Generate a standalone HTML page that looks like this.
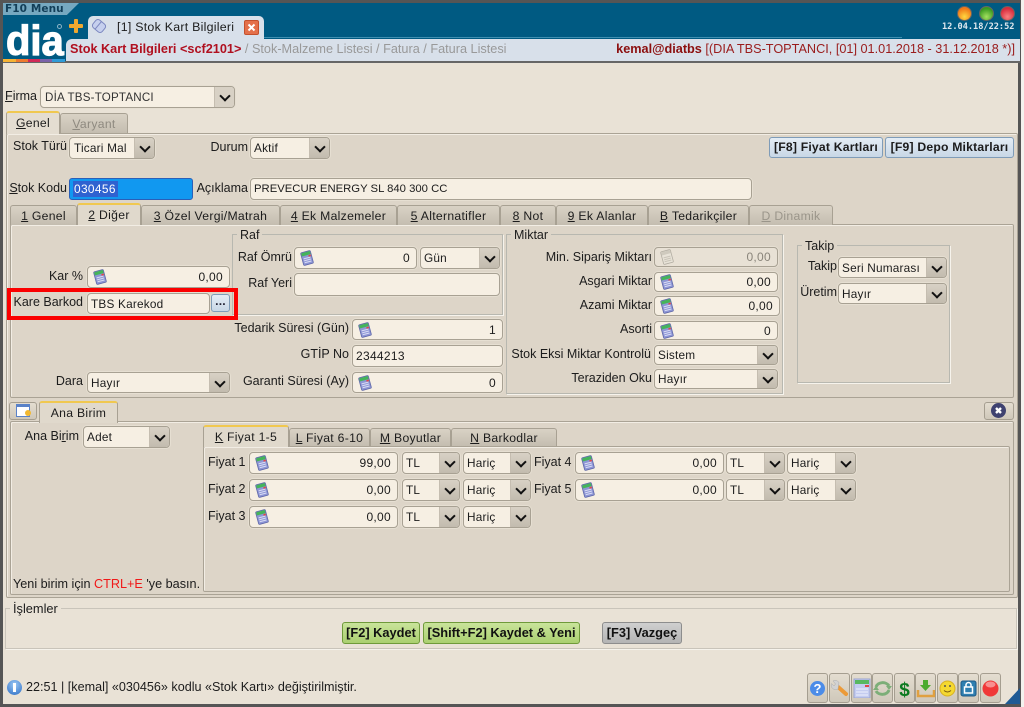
<!DOCTYPE html>
<html><head><meta charset="utf-8"><style>
html,body{margin:0;padding:0;width:1024px;height:707px;overflow:hidden;background:#f4f2ee}
body{position:relative;font-family:"Liberation Sans",sans-serif;font-size:12.5px;color:#1c1c1c}
div,span.a{position:absolute;box-sizing:border-box}
.l{line-height:16px;height:16px;text-align:right;white-space:nowrap;left:0}
.t{line-height:16px;height:16px;white-space:nowrap}
.f{background:#f6efe3;border:1px solid #a8a193;border-radius:4px;box-shadow:0 0 0 1px #e6dfd2;font-size:11.8px;letter-spacing:.2px;white-space:nowrap;overflow:hidden;padding-left:3px;display:flex;align-items:center}
.f.r{justify-content:flex-end;padding-right:6px;font-size:12px;letter-spacing:.3px}
.f svg{position:absolute;left:4px;top:50%;margin-top:-8px}
.s .b{right:0;top:0;bottom:0;width:20px;background:linear-gradient(#d8d1c5,#c2bbae);border-left:1px solid #c5bdb0}
.s .b:after{content:"";position:absolute;left:6px;top:50%;margin-top:-5px;width:6px;height:6px;border:solid #111;border-width:0 2px 2px 0;transform:rotate(45deg)}
.tab{background:linear-gradient(#d9d2c5,#c4bdb0);border:1px solid #a8a193;border-bottom:0;border-radius:3px 3px 0 0;text-align:center;white-space:nowrap;letter-spacing:.3px;font-size:12.2px}
.tab.on{background:#e0d9cc;border-top:2px solid #f0c850;z-index:3}
.p{background:#ddd5c8;border:1px solid #aaa395;border-radius:2px;box-shadow:inset 1px 1px 0 #f2ede4}
.fs{border:1px solid #b8b8b0;box-shadow:1px 1px 0 #f6f3ec}
.lg{background:#ddd5c8;padding:0 3px;line-height:14px;height:14px}
.bt{background:linear-gradient(#e4edf5,#c8d7e6);border:1px solid #7f9cb8;border-radius:3px;font-weight:bold;text-align:center;white-space:nowrap;font-size:12.2px;letter-spacing:.2px}
.g{background:linear-gradient(#c9e49a,#aad070);border:1px solid #6f9a3a;border-radius:3px;font-weight:bold;text-align:center;white-space:nowrap;font-size:12.8px;line-height:20px;color:#111}
.tb{top:673px;width:21px;height:30px;background:linear-gradient(#e4ddd0,#cfc8ba);border:1px solid #a59e90;border-radius:3px}
.tb svg{position:absolute;left:0;top:4px}
u{text-underline-offset:1px}
</style></head><body>
<svg width="0" height="0" style="position:absolute"><defs>
<symbol id="c" viewBox="0 0 16 16"><g transform="rotate(-15 8 8)"><rect x="3" y="1.5" width="10" height="13" rx="1" fill="#8e96d6" stroke="#5f68a8" stroke-width=".8"/><rect x="3.5" y="2" width="9" height="3.2" fill="#45b45a"/><rect x="10" y="5.6" width="2.4" height="1.6" fill="#e04848"/><path d="M4.5 8h7M4.5 10h7M4.5 12h7" stroke="#d9dcf4" stroke-width="1"/></g></symbol>
<symbol id="d" viewBox="0 0 16 16"><g transform="rotate(-15 8 8)"><rect x="3" y="1.5" width="10" height="13" rx="1" fill="#e8e3d8" stroke="#b2ada2" stroke-width=".8"/><rect x="3.5" y="2" width="9" height="3.2" fill="#cfcabe"/><path d="M4.5 8h7M4.5 10h7M4.5 12h7" stroke="#c9c4b8" stroke-width="1"/></g></symbol>
</defs></svg>

<!-- window -->
<div style="left:0;top:0;width:1021px;height:707px;background:#e9e2d6;border:3px solid #555;border-bottom-width:3px"></div>
<div style="left:3px;top:3px;width:1017px;height:59px;background:#005a82"></div>
<div style="left:3px;top:3px;width:76px;height:12px;background:#76a8c0;clip-path:polygon(0 0,100% 0,84% 100%,0 100%)"></div>
<div class="t" style="left:5px;top:2px;font-family:'DejaVu Sans',sans-serif;font-weight:bold;font-size:10.5px;line-height:14px;height:14px;color:#123e58;letter-spacing:.1px">F10 Menu</div>
<div style="left:6px;top:20px;font-weight:bold;font-size:42px;line-height:42px;height:42px;color:#fff;transform:scaleX(.95);transform-origin:0 0;-webkit-text-stroke:1.2px #fff;z-index:1">dia</div>
<div style="left:57px;top:24px;width:5px;height:5px;border:1px solid #8db5c8;border-radius:50%"></div>
<div style="left:3px;top:59px;width:13px;height:3px;background:#f5b335;z-index:2"></div>
<div style="left:16px;top:59px;width:12px;height:3px;background:#ee7a30;z-index:2"></div>
<div style="left:28px;top:59px;width:12px;height:3px;background:#d02a58;z-index:2"></div>
<div style="left:40px;top:59px;width:12px;height:3px;background:#7a62a8;z-index:2"></div>
<div style="left:52px;top:59px;width:13px;height:3px;background:#2f9ad6;z-index:2"></div>
<div style="left:74px;top:19px;width:4px;height:14px;background:#f0a830;border-radius:1px"></div>
<div style="left:69px;top:24px;width:14px;height:4px;background:#f0a830;border-radius:1px"></div>

<div style="left:88px;top:16px;width:176px;height:24px;background:#d8e0ea;border-radius:5px 5px 0 0"></div>
<svg style="position:absolute;left:90px;top:17px" width="18" height="18" viewBox="0 0 18 18"><g transform="rotate(40 9 9)"><rect x="3" y="4" width="12" height="10" rx="3" fill="#c6d0ee" stroke="#7c88c0"/><path d="M8 4v10" stroke="#7c88c0"/></g></svg>
<div class="t" style="left:117px;top:19px;letter-spacing:.25px;font-size:12.4px">[1] Stok Kart Bilgileri</div>
<div style="left:244px;top:20px;width:15px;height:15px;background:#e4704a;border:1px solid #c4502c;border-radius:2px"></div>
<svg style="position:absolute;left:244px;top:20px" width="15" height="15"><path d="M4.5 4.5l6 6M10.500 4.500l-6 6" stroke="#fff" stroke-width="2"/></svg>
<div style="left:264px;top:37px;width:638px;height:1px;background:#3f8fb0"></div>
<div style="left:66px;top:39px;width:954px;height:22px;background:#d8e0ea;border-radius:6px 0 0 0"></div>
<div style="left:3px;top:61px;width:1017px;height:2px;background:#666"></div>
<div class="t" style="left:70px;top:41px;white-space:nowrap;font-size:12.7px;color:#999"><b style="color:#b01020">Stok Kart Bilgileri &lt;scf2101&gt;</b> / Stok-Malzeme Listesi / Fatura / Fatura Listesi</div>
<div class="t" style="left:0;width:1015px;text-align:right;top:41px;font-size:12.7px;color:#9a1c1c"><b style="color:#8c0f0f">kemal@diatbs</b> [(DIA TBS-TOPTANCI, [01] 01.01.2018 - 31.12.2018 *)]</div>
<div style="left:957px;top:6px;width:15px;height:15px;border-radius:50%;background:radial-gradient(circle at 50% 75%,#ffd840,#f07818 70%);border:1px solid #666"></div>
<div style="left:979px;top:6px;width:15px;height:15px;border-radius:50%;background:radial-gradient(circle at 50% 75%,#a4e060,#3a9a20 70%);border:1px solid #666"></div>
<div style="left:1000px;top:6px;width:15px;height:15px;border-radius:50%;background:radial-gradient(circle at 50% 75%,#f88080,#d82c3c 70%);border:1px solid #666"></div>
<div class="t" style="left:942px;top:20px;font-family:'DejaVu Sans Mono','Liberation Mono',monospace;font-weight:bold;font-size:8.6px;color:#dfe8ee;line-height:14px;height:14px">12.04.18/22:52</div>

<!-- firma -->
<div class="l" style="width:37px;top:88px"><u>F</u>irma</div>
<div class="f s" style="left:40px;top:86px;width:195px;height:22px;color:#333;font-size:11.6px;padding-left:4px">DİA TBS-TOPTANCI<div class="b" style="background:#d8d1c5"></div></div>

<!-- outer tabs -->
<div class="tab on" style="left:6px;top:111px;width:54px;height:23px;line-height:21px;background:#e4ddd1"><u>G</u>enel</div>
<div class="tab" style="left:60px;top:113px;width:68px;height:20px;line-height:20px;color:#8f8a80"><u>V</u>aryant</div>
<div class="p" style="left:6px;top:133px;width:1012px;height:465px"></div>

<div class="l" style="width:67px;top:138px">Stok Türü</div>
<div class="f s" style="left:69px;top:137px;width:86px;height:22px;padding-left:4px">Ticari Mal<div class="b"></div></div>
<div class="l" style="width:248px;top:139px">Durum</div>
<div class="f s" style="left:250px;top:137px;width:80px;height:22px">Aktif<div class="b"></div></div>
<div class="bt" style="left:769px;top:137px;width:114px;height:21px;line-height:19px">[F8] Fiyat Kartları</div>
<div class="bt" style="left:885px;top:137px;width:129px;height:21px;line-height:19px">[F9] Depo Miktarları</div>

<div class="l" style="width:67px;top:180px"><u>S</u>tok Kodu</div>
<div style="left:69px;top:178px;width:124px;height:22px;background:#1198f0;border:1px solid #2a5fb8;border-radius:3px"></div>
<div style="left:73px;top:181px;width:45px;height:16px;background:#2f62d0;color:#fff;font-size:11.9px;letter-spacing:.35px;line-height:16px;padding-left:1px">030456</div>
<div class="l" style="width:248px;top:180px">Açıklama</div>
<div class="f" style="left:250px;top:178px;width:502px;height:22px;font-size:11.3px;letter-spacing:0;padding-left:3px">PREVECUR ENERGY SL 840 300 CC</div>

<!-- inner tabs -->
<div class="p" style="left:10px;top:224px;width:1004px;height:174px"></div>
<div class="tab" style="left:10px;top:205px;width:67px;height:20px;line-height:20px"><u>1</u> Genel</div>
<div class="tab on" style="left:77px;top:203px;width:64px;height:22px;line-height:20px"><u>2</u> Diğer</div>
<div class="tab" style="left:141px;top:205px;width:139px;height:20px;line-height:20px"><u>3</u> Özel Vergi/Matrah</div>
<div class="tab" style="left:280px;top:205px;width:117px;height:20px;line-height:20px"><u>4</u> Ek Malzemeler</div>
<div class="tab" style="left:397px;top:205px;width:103px;height:20px;line-height:20px"><u>5</u> Alternatifler</div>
<div class="tab" style="left:500px;top:205px;width:56px;height:20px;line-height:20px"><u>8</u> Not</div>
<div class="tab" style="left:556px;top:205px;width:92px;height:20px;line-height:20px"><u>9</u> Ek Alanlar</div>
<div class="tab" style="left:648px;top:205px;width:101px;height:20px;line-height:20px"><u>B</u> Tedarikçiler</div>
<div class="tab" style="left:749px;top:205px;width:84px;height:20px;line-height:20px;color:#9a958a"><u>D</u> Dinamik</div>

<!-- fieldsets -->
<div class="fs" style="left:232px;top:234px;width:271px;height:81px"></div>
<div class="lg" style="left:237px;top:228px">Raf</div>
<div class="fs" style="left:506px;top:234px;width:277px;height:160px"></div>
<div class="lg" style="left:511px;top:228px">Miktar</div>
<div class="fs" style="left:797px;top:245px;width:153px;height:138px"></div>
<div class="lg" style="left:802px;top:239px">Takip</div>

<!-- left column -->
<div class="l" style="width:83px;top:268px">Kar %</div>
<div class="f r" style="left:87px;top:266px;width:143px;height:22px"><svg width="16" height="16"><use href="#c"/></svg>0,00</div>
<div class="l" style="width:83px;top:294px">Kare Barkod</div>
<div class="f" style="left:87px;top:293px;width:123px;height:21px">TBS Karekod</div>
<div class="bt" style="left:211px;top:294px;width:19px;height:18px;line-height:13px;color:#223">...</div>
<div style="left:7px;top:288px;width:231px;height:32px;border:4px solid #fb0000;z-index:5"></div>
<div class="l" style="width:83px;top:373px">Dara</div>
<div class="f s" style="left:87px;top:372px;width:143px;height:21px">Hayır<div class="b"></div></div>

<!-- raf -->
<div class="l" style="width:292px;top:249px">Raf Ömrü</div>
<div class="f r" style="left:294px;top:247px;width:123px;height:22px"><svg width="16" height="16"><use href="#c"/></svg>0</div>
<div class="f s" style="left:420px;top:247px;width:80px;height:22px">Gün<div class="b"></div></div>
<div class="l" style="width:292px;top:275px">Raf Yeri</div>
<div class="f" style="left:294px;top:273px;width:206px;height:23px"></div>
<div class="l" style="width:349px;top:320px">Tedarik Süresi (Gün)</div>
<div class="f r" style="left:352px;top:319px;width:151px;height:21px"><svg width="16" height="16"><use href="#c"/></svg>1</div>
<div class="l" style="width:349px;top:346px">GTİP No</div>
<div class="f" style="left:352px;top:345px;width:151px;height:22px;font-size:12px;letter-spacing:.3px">2344213</div>
<div class="l" style="width:349px;top:373px">Garanti Süresi (Ay)</div>
<div class="f r" style="left:352px;top:372px;width:151px;height:21px"><svg width="16" height="16"><use href="#c"/></svg>0</div>

<!-- miktar -->
<div class="l" style="width:652px;top:249px">Min. Sipariş Miktarı</div>
<div class="f r" style="left:654px;top:247px;width:124px;height:20px;background:#e8e1d5;color:#8a857b"><svg width="16" height="16"><use href="#d"/></svg>0,00</div>
<div class="l" style="width:652px;top:273px">Asgari Miktar</div>
<div class="f r" style="left:654px;top:272px;width:124px;height:20px"><svg width="16" height="16"><use href="#c"/></svg>0,00</div>
<div class="l" style="width:652px;top:297px">Azami Miktar</div>
<div class="f r" style="left:654px;top:296px;width:126px;height:20px"><svg width="16" height="16"><use href="#c"/></svg>0,00</div>
<div class="l" style="width:652px;top:321px">Asorti</div>
<div class="f r" style="left:654px;top:321px;width:124px;height:19px"><svg width="16" height="16"><use href="#c"/></svg>0</div>
<div class="l" style="width:651px;top:346px">Stok Eksi Miktar Kontrolü</div>
<div class="f s" style="left:654px;top:345px;width:124px;height:20px">Sistem<div class="b"></div></div>
<div class="l" style="width:652px;top:370px">Teraziden Oku</div>
<div class="f s" style="left:654px;top:369px;width:124px;height:20px">Hayır<div class="b"></div></div>

<!-- takip -->
<div class="l" style="width:837px;top:258px">Takip</div>
<div class="f s" style="left:838px;top:257px;width:109px;height:21px">Seri Numarası<div class="b"></div></div>
<div class="l" style="width:837px;top:284px">Üretim</div>
<div class="f s" style="left:838px;top:283px;width:109px;height:21px">Hayır<div class="b"></div></div>

<!-- lower -->
<div style="left:9px;top:402px;width:28px;height:18px;background:linear-gradient(#e4ddd0,#cfc8ba);border:1px solid #a59e90;border-radius:3px"></div>
<div style="left:16px;top:404px;width:14px;height:13px;background:#fff;border:1px solid #5a82c8;border-top-width:3px"></div>
<div style="left:25px;top:410px;width:6px;height:6px;background:#f2b830;border-radius:50%"></div>
<div class="p" style="left:10px;top:421px;width:1004px;height:174px"></div>
<div class="tab on" style="left:39px;top:401px;width:79px;height:22px;line-height:20px">Ana Birim</div>
<div style="left:984px;top:402px;width:30px;height:18px;background:linear-gradient(#e4ddd0,#cfc8ba);border:1px solid #a59e90;border-radius:3px"></div>
<div style="left:991px;top:403px;width:15px;height:15px;border-radius:50%;background:#3f4270"></div>
<svg style="position:absolute;left:991px;top:403px" width="15" height="15"><path d="M5 5l5 5M10 5l-5 5" stroke="#fff" stroke-width="2.400"/></svg>

<div class="l" style="width:79px;top:428px">Ana Bi<u>r</u>im</div>
<div class="f s" style="left:83px;top:426px;width:87px;height:22px">Adet<div class="b"></div></div>
<div class="t" style="left:13px;top:576px;font-size:12.65px">Yeni birim için <span style="color:#f01818">CTRL+E</span> 'ye basın.</div>

<div class="p" style="left:203px;top:446px;width:807px;height:146px"></div>
<div class="tab on" style="left:203px;top:425px;width:86px;height:22px;line-height:20px"><u>K</u> Fiyat 1-5</div>
<div class="tab" style="left:289px;top:428px;width:81px;height:18px;line-height:18px"><u>L</u> Fiyat 6-10</div>
<div class="tab" style="left:370px;top:428px;width:81px;height:18px;line-height:18px"><u>M</u> Boyutlar</div>
<div class="tab" style="left:451px;top:428px;width:106px;height:18px;line-height:18px"><u>N</u> Barkodlar</div>

<div class="t" style="left:208px;top:454px">Fiyat 1</div>
<div class="f r" style="left:249px;top:452px;width:149px;height:22px"><svg width="16" height="16"><use href="#c"/></svg>99,00</div>
<div class="f s" style="left:402px;top:452px;width:58px;height:22px">TL<div class="b"></div></div>
<div class="f s" style="left:463px;top:452px;width:68px;height:22px">Hariç<div class="b"></div></div>
<div class="t" style="left:208px;top:481px">Fiyat 2</div>
<div class="f r" style="left:249px;top:479px;width:149px;height:22px"><svg width="16" height="16"><use href="#c"/></svg>0,00</div>
<div class="f s" style="left:402px;top:479px;width:58px;height:22px">TL<div class="b"></div></div>
<div class="f s" style="left:463px;top:479px;width:68px;height:22px">Hariç<div class="b"></div></div>
<div class="t" style="left:208px;top:508px">Fiyat 3</div>
<div class="f r" style="left:249px;top:506px;width:149px;height:22px"><svg width="16" height="16"><use href="#c"/></svg>0,00</div>
<div class="f s" style="left:402px;top:506px;width:58px;height:22px">TL<div class="b"></div></div>
<div class="f s" style="left:463px;top:506px;width:68px;height:22px">Hariç<div class="b"></div></div>
<div class="t" style="left:534px;top:454px">Fiyat 4</div>
<div class="f r" style="left:575px;top:452px;width:149px;height:22px"><svg width="16" height="16"><use href="#c"/></svg>0,00</div>
<div class="f s" style="left:726px;top:452px;width:59px;height:22px">TL<div class="b"></div></div>
<div class="f s" style="left:787px;top:452px;width:69px;height:22px">Hariç<div class="b"></div></div>
<div class="t" style="left:534px;top:481px">Fiyat 5</div>
<div class="f r" style="left:575px;top:479px;width:149px;height:22px"><svg width="16" height="16"><use href="#c"/></svg>0,00</div>
<div class="f s" style="left:726px;top:479px;width:59px;height:22px">TL<div class="b"></div></div>
<div class="f s" style="left:787px;top:479px;width:69px;height:22px">Hariç<div class="b"></div></div>

<!-- islemler -->
<div class="fs" style="left:5px;top:608px;width:1012px;height:41px;border-color:#c9c4ba"></div>
<div class="lg" style="left:10px;top:602px;background:#e9e2d6;font-size:12.8px">İşlemler</div>
<div class="g" style="left:342px;top:622px;width:78px;height:22px">[F2] Kaydet</div>
<div class="g" style="left:423px;top:622px;width:157px;height:22px">[Shift+F2] Kaydet &amp; Yeni</div>
<div class="g" style="left:602px;top:622px;width:80px;height:22px;background:linear-gradient(#cfcfcf,#b4b4b4);border-color:#8d8d8d">[F3] Vazgeç</div>

<!-- status -->
<div style="left:7px;top:680px;width:15px;height:15px;border-radius:50%;background:radial-gradient(circle at 50% 30%,#9cc8f4,#2a6cc4)"></div>
<div style="left:13px;top:683px;width:3px;height:9px;background:#fff"></div>
<div class="t" style="left:26px;top:679px;font-size:12.6px">22:51 | [kemal] «030456» kodlu «Stok Kartı» değiştirilmiştir.</div>

<!-- toolbar -->
<div class="tb" style="left:807px"><svg width="19" height="20"><circle cx="9.500" cy="10.500" r="7.500" fill="#4c8ce8"/><text x="9.500" y="15" font-size="13" font-weight="bold" fill="#fff" text-anchor="middle" font-family="Liberation Sans">?</text></svg></div>
<div class="tb" style="left:829px"><svg width="19" height="20"><path d="M7 8l9 8" stroke="#ec9a38" stroke-width="4" stroke-linecap="round"/><path d="M9 4.500A4.500 4.500 0 0 0 3 3l2.500 3-1.500 2L1.500 5.500A4.500 4.500 0 0 0 8 11z" fill="#d2d2d2" stroke="#aaa" stroke-width=".5"/></svg></div>
<div class="tb" style="left:851px"><svg width="19" height="20"><rect x="2" y="1" width="16" height="19" fill="#c4ccf0" stroke="#9aa4d0"/><rect x="3" y="2" width="14" height="4" fill="#58b860"/><rect x="13" y="7" width="4" height="2" fill="#e04848"/><path d="M4 11h12M4 14h12M4 17h12" stroke="#eef0fb"/></svg></div>
<div class="tb" style="left:872px"><svg width="19" height="20"><path d="M3 9a7 6 0 0 1 13-1M16 12a7 6 0 0 1-13 1" fill="none" stroke="#7cae78" stroke-width="3"/><path d="M13 8h6l-3 4zM0 12h6l-3-4z" fill="#7cae78"/></svg></div>
<div class="tb" style="left:894px"><svg width="19" height="20"><text x="9.500" y="18" font-size="19" font-weight="bold" fill="#0c7a20" text-anchor="middle" font-family="Liberation Sans">$</text></svg></div>
<div class="tb" style="left:915px"><svg width="19" height="20"><path d="M7 2h5v5h3l-5.500 6L4 7h3z" fill="#4cab30"/><path d="M2 12v6h16v-6" fill="none" stroke="#e0a040" stroke-width="2.500"/></svg></div>
<div class="tb" style="left:937px"><svg width="19" height="20"><circle cx="9.500" cy="10.500" r="7.500" fill="#f4d830" stroke="#d8b020"/><path d="M6 12.500q3.500 3 7 0" fill="none" stroke="#806010"/><circle cx="7" cy="8" r="1" fill="#555"/><circle cx="12" cy="8" r="1" fill="#555"/></svg></div>
<div class="tb" style="left:958px"><svg width="19" height="20"><rect x="2" y="3" width="15" height="15" rx="2" fill="#2f7fb0" stroke="#1c5a88"/><rect x="5.500" y="9" width="8" height="6" fill="none" stroke="#fff" stroke-width="1.500"/><path d="M7 9V7a2.500 2.500 0 0 1 5 0v2" fill="none" stroke="#fff" stroke-width="1.500"/></svg></div>
<div class="tb" style="left:980px"><svg width="19" height="20"><circle cx="9.500" cy="10.500" r="8" fill="#f03838"/><ellipse cx="9.500" cy="6.500" rx="5" ry="3" fill="#f89090"/></svg></div>
<div style="left:1005px;top:688px;width:15px;height:16px;background:#1f5a94;clip-path:polygon(100% 0,100% 100%,0 100%)"></div>
</body></html>
